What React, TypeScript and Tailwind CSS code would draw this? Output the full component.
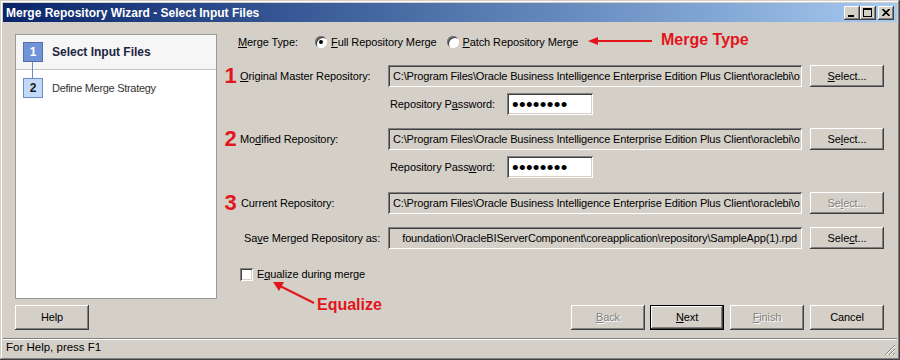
import React from "react";

const raised =
  "shadow-[inset_-1px_-1px_#404040,inset_1px_1px_#ffffff,inset_-2px_-2px_#808080,inset_2px_2px_#d4d0c8]";
const sunken =
  "shadow-[inset_1px_1px_#808080,inset_-1px_-1px_#ffffff,inset_2px_2px_#404040,inset_-2px_-2px_#d4d0c8]";
const disabledText = "text-[#808080] [text-shadow:1px_1px_0_#ffffff]";

// only the part the field shows; the rest is scrolled out of view
const PATH =
  "C:\\Program Files\\Oracle Business Intelligence Enterprise Edition Plus Client\\oraclebi\\o";
const SAVE_PATH =
  "foundation\\OracleBIServerComponent\\coreapplication\\repository\\SampleApp(1).rpd";

function Btn({
  children,
  disabled,
  isDefault,
  className = "",
}: {
  children: React.ReactNode;
  disabled?: boolean;
  isDefault?: boolean;
  className?: string;
}) {
  return (
    <div
      className={`flex w-[74px] shrink-0 items-center justify-center bg-[#d4d0c8] ${raised} ${
        isDefault ? "border border-black" : ""
      } ${disabled ? disabledText : ""} ${className}`}
    >
      {children}
    </div>
  );
}

function PathField({ value, alignEnd }: { value: string; alignEnd?: boolean }) {
  return (
    <div
      className={`flex h-[22px] w-[414px] shrink-0 items-center overflow-hidden whitespace-nowrap bg-[#d4d0c8] ${sunken} ${
        alignEnd ? "justify-end px-[5px]" : "pl-[5px] pr-[1px]"
      }`}
    >
      <span className="min-w-0 overflow-hidden tracking-[-0.16px]">{value}</span>
    </div>
  );
}

function Password({ mnemonic }: { mnemonic: "a" | "w" }) {
  return (
    <div className="flex h-[22px] items-center">
      <span className="ml-[168px] w-[117px]">
        {mnemonic === "a" ? (
          <>
            Repository P<u>a</u>ssword:
          </>
        ) : (
          <>
            Repository Pass<u>w</u>ord:
          </>
        )}
      </span>
      <div className={`flex h-[22px] w-[86px] items-center bg-white pl-[5px] ${sunken}`}>
        <span className="text-[19px] leading-none tracking-[0.3px]">••••••••</span>
      </div>
    </div>
  );
}

function Num({ n }: { n: string }) {
  return (
    <span className="w-[17px] shrink-0 text-center text-[22px] font-bold leading-none tracking-normal text-[#e3151c]">
      {n}
    </span>
  );
}

function Radio({ checked }: { checked?: boolean }) {
  return (
    <span className="flex h-[12px] w-[12px] shrink-0 items-center justify-center rounded-full bg-white shadow-[inset_1px_1px_#808080,inset_-1px_-1px_#ffffff,inset_2px_2px_#404040]">
      {checked && <span className="h-[4px] w-[4px] rounded-full bg-black" />}
    </span>
  );
}

export default function App() {
  return (
    <div className="relative flex h-[360px] w-[900px] flex-col bg-[#d4d0c8] p-[3px] font-['Liberation_Sans',Arial,sans-serif] text-[11px] tracking-[-0.1px] text-black shadow-[inset_-1px_-1px_#404040,inset_1px_1px_#d4d0c8,inset_-2px_-2px_#808080,inset_2px_2px_#ffffff]">
      {/* Title bar */}
      <div className="flex h-[19px] shrink-0 items-center justify-between bg-gradient-to-r from-[#0a246a] to-[#a6caf0] pl-[3px] pr-[3px]">
        <span className="text-[12px] font-bold tracking-normal text-white">
          Merge Repository Wizard - Select Input Files
        </span>
        <div className="flex items-center">
          <div className={`relative h-[14px] w-[16px] bg-[#d4d0c8] ${raised}`}>
            <span className="absolute left-[4px] top-[9px] h-[2px] w-[6px] bg-black" />
          </div>
          <div className={`relative h-[14px] w-[16px] bg-[#d4d0c8] ${raised}`}>
            <span className="absolute left-[3px] top-[2px] h-[9px] w-[9px] border border-t-2 border-black" />
          </div>
          <div className={`ml-[2px] flex h-[14px] w-[16px] items-center justify-center bg-[#d4d0c8] ${raised}`}>
            <svg width="8" height="7" viewBox="0 0 8 7">
              <path d="M0.5 0 L7.5 7 M7.5 0 L0.5 7" stroke="black" strokeWidth="1.6" />
            </svg>
          </div>
        </div>
      </div>

      {/* Body */}
      <div className="mt-[12px] flex h-[265px] shrink-0">
        {/* Steps panel */}
        <div className="relative ml-[12px] flex w-[202px] shrink-0 flex-col border border-[#9a9a9a] bg-white">
          <div className="flex h-[35px] items-center border-b border-[#c8c8c8] bg-[#f6f6f6] pl-[7px]">
            <span className="flex h-[20px] w-[20px] items-center justify-center border border-[#4f6fb0] bg-[#7094d6] text-[12px] font-bold text-white">
              1
            </span>
            <span className="ml-[9px] text-[12px] font-bold tracking-normal text-[#1c2540]">
              Select Input Files
            </span>
          </div>
          <div className="flex h-[36px] items-center pl-[7px]">
            <span className="flex h-[20px] w-[20px] items-center justify-center border border-[#6b8dc6] bg-[#c3d9f7] text-[12px] font-bold text-[#1a1a1a]">
              2
            </span>
            <span className="ml-[9px] text-[11px] tracking-[-0.3px] text-[#333]">
              Define Merge Strategy
            </span>
          </div>
          <span className="absolute left-[16px] top-[27px] h-[17px] w-px bg-[#6b8dc6]" />
        </div>

        {/* Form */}
        <div className="ml-[5px] flex flex-1 flex-col">
          <div className="flex h-[16px] items-center pl-[16px]">
            <span className="w-[77px]">
              <u>M</u>erge Type:
            </span>
            <Radio checked />
            <span className="ml-[4px]">
              <u>F</u>ull Repository Merge
            </span>
            <span className="ml-[10px]">
              <Radio />
            </span>
            <span className="ml-[4px]">
              <u>P</u>atch Repository Merge
            </span>
          </div>

          <div className="mt-[15px] flex h-[22px] items-center">
            <div className="flex w-[166px] shrink-0 items-center">
              <Num n="1" />
              <span className="ml-[1px]">
                <u>O</u>riginal Master Repository:
              </span>
            </div>
            <PathField value={PATH} />
            <Btn className="ml-[8px] h-[22px]">
              <span>
                <u>S</u>elect...
              </span>
            </Btn>
          </div>
          <div className="mt-[6px]">
            <Password mnemonic="a" />
          </div>

          <div className="mt-[13px] flex h-[22px] items-center">
            <div className="flex w-[166px] shrink-0 items-center">
              <Num n="2" />
              <span className="ml-[1px]">
                Mo<u>d</u>ified Repository:
              </span>
            </div>
            <PathField value={PATH} />
            <Btn className="ml-[8px] h-[22px]">
              <span>
                Se<u>l</u>ect...
              </span>
            </Btn>
          </div>
          <div className="mt-[6px]">
            <Password mnemonic="w" />
          </div>

          <div className="mt-[14px] flex h-[22px] items-center">
            <div className="flex w-[166px] shrink-0 items-center">
              <Num n="3" />
              <span className="ml-[2px]">Current Repository:</span>
            </div>
            <PathField value={PATH} />
            <Btn className="ml-[8px] h-[22px]" disabled>
              <span>
                Se<u>l</u>ect...
              </span>
            </Btn>
          </div>

          <div className="mt-[13px] flex h-[22px] items-center">
            <div className="flex w-[166px] shrink-0 items-center pl-[22px]">
              <span>
                Sa<u>v</u>e Merged Repository as:
              </span>
            </div>
            <PathField value={SAVE_PATH} alignEnd />
            <Btn className="ml-[8px] h-[22px]">
              <span>
                Sele<u>c</u>t...
              </span>
            </Btn>
          </div>

          <div className="mt-[19px] flex h-[13px] items-center pl-[18px]">
            <span className={`h-[13px] w-[13px] shrink-0 bg-white ${sunken}`} />
            <span className="ml-[4px]">
              E<u>q</u>ualize during merge
            </span>
          </div>
        </div>
      </div>

      {/* Buttons */}
      <div className="mt-[6px] flex h-[25px] shrink-0">
        <Btn className="ml-[12px]">Help</Btn>
        <Btn className="ml-auto" disabled>
          <span>
            <u>B</u>ack
          </span>
        </Btn>
        <Btn className="ml-[5px]" isDefault>
          <span>
            <u>N</u>ext
          </span>
        </Btn>
        <Btn className="ml-[6px]" disabled>
          <span>
            <u>F</u>inish
          </span>
        </Btn>
        <Btn className="ml-[6px] mr-[13px]">Cancel</Btn>
      </div>

      {/* Status bar */}
      <div className="relative mt-auto flex h-[19px] shrink-0 items-center border-t border-[#808080] pl-[3px] shadow-[inset_0_1px_#ffffff]">
        <span className="text-[11.5px] tracking-normal">For Help, press F1</span>
        <svg className="absolute bottom-[1px] right-[1px]" width="12" height="12" viewBox="0 0 12 12">
          <path d="M11 1 L1 11 M11 5 L5 11 M11 9 L9 11" stroke="#808080" strokeWidth="1" />
          <path d="M11 2 L2 11 M11 6 L6 11 M11 10 L10 11" stroke="#ffffff" strokeWidth="1" />
        </svg>
      </div>

      {/* Red annotations */}
      <svg className="pointer-events-none absolute left-[585px] top-[34px]" width="70" height="14" viewBox="0 0 70 14">
        <path d="M12 7 L67 7" stroke="#e3151c" strokeWidth="2" />
        <path d="M3 7 L13 3 L13 11 Z" fill="#e3151c" />
      </svg>
      <span className="pointer-events-none absolute left-[661px] top-[30px] text-[16px] font-bold leading-[20px] tracking-normal text-[#e3151c]">
        Merge Type
      </span>
      <svg className="pointer-events-none absolute left-[270px] top-[279px]" width="48" height="28" viewBox="0 0 48 28">
        <path d="M44 24 L10 7" stroke="#e3151c" strokeWidth="2" />
        <path d="M3 3 L14 3 L9 12 Z" fill="#e3151c" />
      </svg>
      <span className="pointer-events-none absolute left-[317px] top-[295px] text-[16px] font-bold leading-[20px] tracking-normal text-[#e3151c]">
        Equalize
      </span>
    </div>
  );
}
